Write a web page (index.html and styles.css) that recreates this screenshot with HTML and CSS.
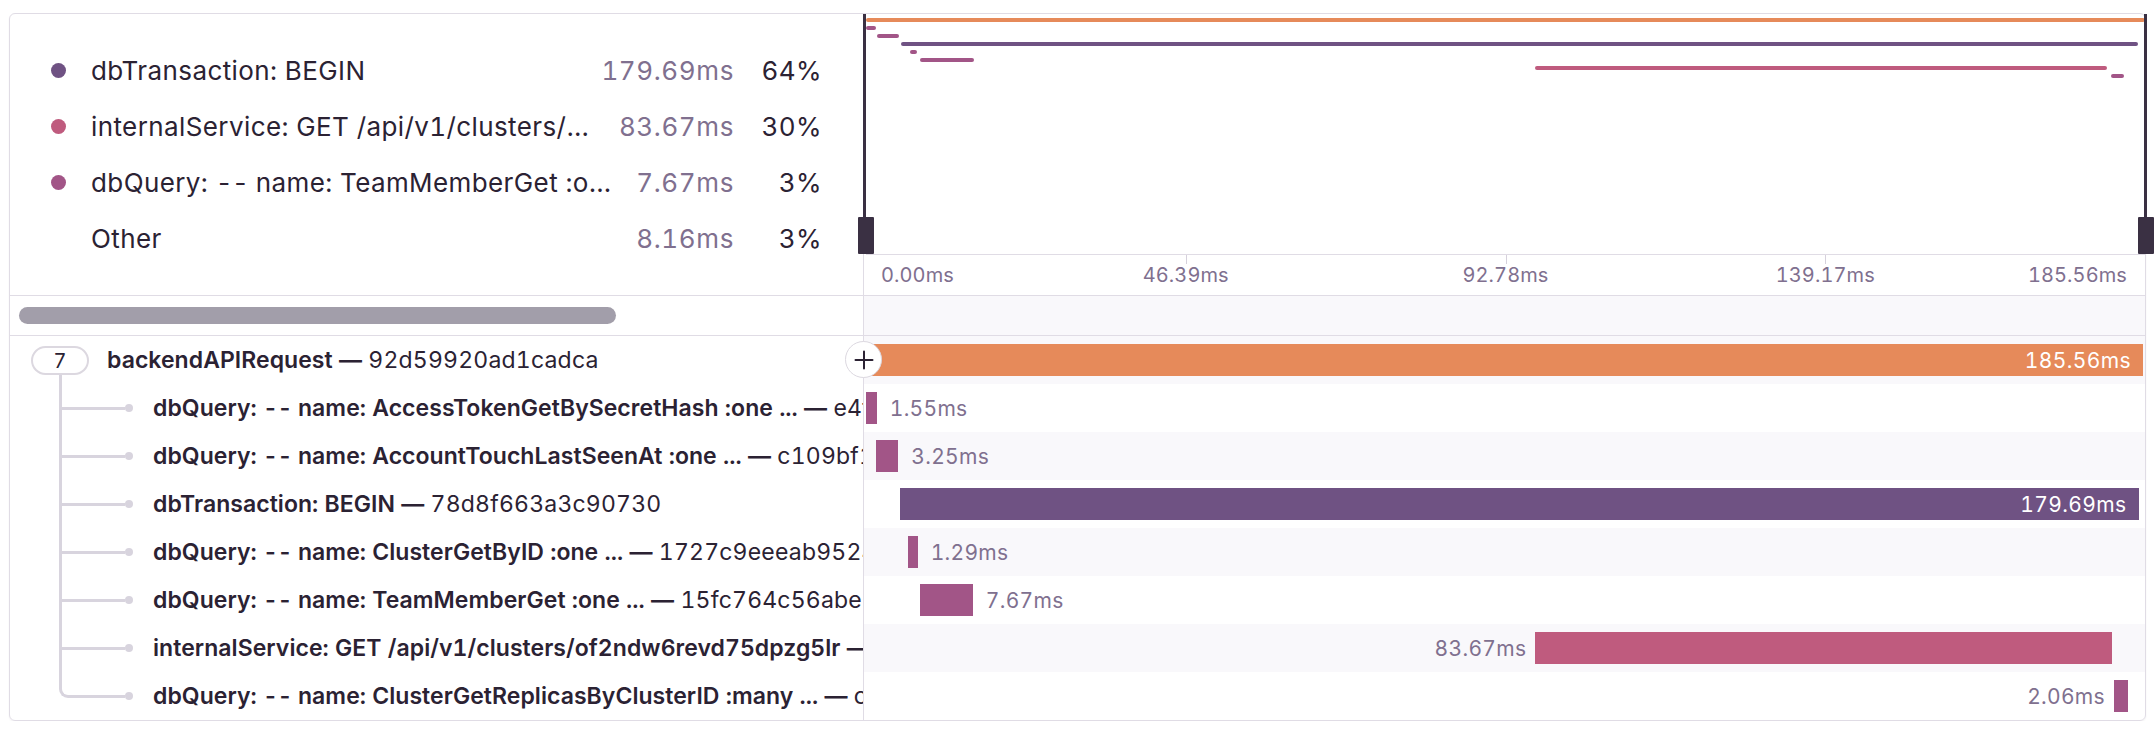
FILE: index.html
```html
<!DOCTYPE html>
<html lang="en">
<head>
<meta charset="utf-8">
<title>Trace</title>
<link rel="stylesheet" href="styles.css">
</head>
<body>
<div class="card">
  <div class="top">
    <div class="legend">
      <div class="lg-row"><span class="lg-dot c-txn"></span><span class="lg-name">dbTransaction: BEGIN</span><span class="lg-ms">179.69ms</span><span class="lg-pct">64%</span></div>
      <div class="lg-row"><span class="lg-dot c-svc"></span><span class="lg-name">internalService: GET /api/v1/clusters/of2ndw6revd75dpzg5lr</span><span class="lg-ms">83.67ms</span><span class="lg-pct">30%</span></div>
      <div class="lg-row"><span class="lg-dot c-qry"></span><span class="lg-name">dbQuery: <span class="dd">--</span> name: TeamMemberGet :one SELECT</span><span class="lg-ms">7.67ms</span><span class="lg-pct">3%</span></div>
      <div class="lg-row"><span class="lg-dot"></span><span class="lg-name">Other</span><span class="lg-ms">8.16ms</span><span class="lg-pct">3%</span></div>
    </div>
    <div class="chart">
      <div class="minimap">
        <div class="mm-track"><div class="mm-bar c-root" style="margin-left:0%;width:100%"></div></div>
        <div class="mm-track"><div class="mm-bar c-qry" style="margin-left:0%;width:0.8%"></div></div>
        <div class="mm-track"><div class="mm-bar c-qry" style="margin-left:0.86%;width:1.72%"></div></div>
        <div class="mm-track"><div class="mm-bar c-txn" style="margin-left:2.74%;width:96.7%"></div></div>
        <div class="mm-track"><div class="mm-bar c-qry" style="margin-left:3.44%;width:0.55%"></div></div>
        <div class="mm-track"><div class="mm-bar c-qry" style="margin-left:4.22%;width:4.2%"></div></div>
        <div class="mm-track"><div class="mm-bar c-svc" style="margin-left:52.3%;width:44.7%"></div></div>
        <div class="mm-track"><div class="mm-bar c-qry" style="margin-left:97.34%;width:1.0%"></div></div>
        <div class="edge edge-l"></div>
        <div class="handle handle-l"></div>
        <div class="edge edge-r"></div>
        <div class="handle handle-r"></div>
      </div>
      <div class="axis">
        <span class="tick" style="left:25%"></span>
        <span class="tick" style="left:50%"></span>
        <span class="tick" style="left:75%"></span>
        <span class="ax-lbl ax-first">0.00ms</span>
        <span class="ax-lbl ax-mid" style="left:25%">46.39ms</span>
        <span class="ax-lbl ax-mid" style="left:50%">92.78ms</span>
        <span class="ax-lbl ax-mid" style="left:75%">139.17ms</span>
        <span class="ax-lbl ax-last">185.56ms</span>
      </div>
    </div>
  </div>

  <div class="scroll-row">
    <div class="scroll-left"><div class="thumb"></div></div>
    <div class="scroll-right"></div>
  </div>

  <div class="rows">
    <div class="row row-root">
      <div class="row-l">
        <div class="badge-col"><span class="badge">7</span><span class="stem"></span></div>
        <span class="lbl root-lbl"><b>backendAPIRequest —</b> 92d59920ad1cadca</span>
      </div>
      <div class="row-r stripe">
        <div class="track">
          <div class="bar c-root bar-in" style="margin-left:0%;width:99.85%"><span class="bl-in">185.56ms</span></div>
        </div>
      </div>
      <span class="toggle"><svg width="20" height="20" viewBox="0 0 20 20"><path d="M10 1.5V18.5M1.5 10H18.5" stroke="#2b2233" stroke-width="2" stroke-linecap="round" fill="none"/></svg></span>
    </div>

    <div class="row">
      <div class="row-l"><span class="conn"></span><span class="tdot"></span><span class="lbl"><b>dbQuery: <span class="dd">--</span> name: AccessTokenGetBySecretHash :one ... —</b> e4f1a0c2b7d93e51</span></div>
      <div class="row-r"><div class="track"><div class="bar c-qry" style="margin-left:0%;width:0.84%"></div><span class="bl">1.55ms</span></div></div>
    </div>

    <div class="row">
      <div class="row-l"><span class="conn"></span><span class="tdot"></span><span class="lbl"><b>dbQuery: <span class="dd">--</span> name: AccountTouchLastSeenAt :one ... —</b> c109bf1e8a2d4c70</span></div>
      <div class="row-r stripe"><div class="track"><div class="bar c-qry" style="margin-left:0.78%;width:1.75%"></div><span class="bl">3.25ms</span></div></div>
    </div>

    <div class="row">
      <div class="row-l"><span class="conn"></span><span class="tdot"></span><span class="lbl"><b>dbTransaction: BEGIN —</b> 78d8f663a3c90730</span></div>
      <div class="row-r"><div class="track"><div class="bar c-txn bar-in" style="margin-left:2.66%;width:96.84%"><span class="bl-in">179.69ms</span></div></div></div>
    </div>

    <div class="row">
      <div class="row-l"><span class="conn"></span><span class="tdot"></span><span class="lbl"><b>dbQuery: <span class="dd">--</span> name: ClusterGetByID :one ... —</b> 1727c9eeeab9524f</span></div>
      <div class="row-r stripe"><div class="track"><div class="bar c-qry" style="margin-left:3.28%;width:0.76%"></div><span class="bl">1.29ms</span></div></div>
    </div>

    <div class="row">
      <div class="row-l"><span class="conn"></span><span class="tdot"></span><span class="lbl"><b>dbQuery: <span class="dd">--</span> name: TeamMemberGet :one ... —</b> 15fc764c56abe01d</span></div>
      <div class="row-r"><div class="track"><div class="bar c-qry" style="margin-left:4.22%;width:4.13%"></div><span class="bl">7.67ms</span></div></div>
    </div>

    <div class="row">
      <div class="row-l"><span class="conn"></span><span class="tdot"></span><span class="lbl"><b>internalService: GET /api/v1/clusters/of2ndw6revd75dpzg5lr —</b> 3b1e0f9a6c2d84e7</span></div>
      <div class="row-r stripe"><div class="track track-end"><span class="bl bl-left">83.67ms</span><div class="bar c-svc" style="width:45.05%;margin-right:2.62%"></div></div></div>
    </div>

    <div class="row">
      <div class="row-l"><span class="conn conn-last"></span><span class="tdot"></span><span class="lbl"><b>dbQuery: <span class="dd">--</span> name: ClusterGetReplicasByClusterID :many ... —</b> c8e21a7f4b09d356</span></div>
      <div class="row-r"><div class="track track-end"><span class="bl bl-left">2.06ms</span><div class="bar c-qry" style="width:1.11%;margin-right:1.32%"></div></div></div>
    </div>
  </div>
</div>
</body>
</html>
```

FILE: styles.css
```css
* { box-sizing: border-box; }

body {
  margin: 0;
  background: #ffffff;
  font-family: Inter, "Noto Sans", "DejaVu Sans", sans-serif;
  font-variant-numeric: tabular-nums;
  color: #2b2233;
}

.card {
  margin: 13px 0 0 9px;
  width: 2137px;
  height: 708px;
  border: 1px solid #e0dce5;
  border-radius: 6px;
  box-shadow: 0 1px 2px rgba(43, 34, 51, 0.06);
}

.dd { letter-spacing: -0.5px; }

/* ---------- top: legend + minimap ---------- */
.top {
  display: flex;
  height: 282px;
  border-bottom: 1px solid #e0dce5;
}

.legend {
  width: 854px;
  flex: none;
  border-right: 1px solid #e0dce5;
  display: flex;
  flex-direction: column;
  justify-content: center;
  padding: 0 41px;
}

.lg-row {
  height: 56px;
  display: flex;
  align-items: center;
  font-size: 26px;
  letter-spacing: 0.4px;
  white-space: nowrap;
}

.lg-dot {
  width: 15px;
  height: 15px;
  border-radius: 50%;
  flex: none;
  margin-right: 25px;
}

.lg-name {
  flex: 1;
  min-width: 0;
  overflow: hidden;
  text-overflow: ellipsis;
  margin-right: 18px;
}

.lg-ms {
  color: #80708f;
  flex: none;
  letter-spacing: 0.6px;
}

.lg-pct {
  width: 70px;
  margin-left: 18px;
  text-align: right;
  flex: none;
}

/* span colours */
.c-root { background: #e68a5a; }
.c-txn { background: #6f5283; }
.c-svc { background: #bf5b7e; }
.c-qry { background: #a25587; }

.chart {
  flex: 1;
  display: flex;
  flex-direction: column;
  min-width: 0;
}

.minimap {
  height: 240px;
  position: relative;
  padding: 4px 0 0 2px;
}

.mm-track {
  height: 4px;
  margin-bottom: 4px;
  display: flex;
}

.mm-bar {
  height: 4px;
  border-radius: 2px;
  flex: none;
}

.edge {
  position: absolute;
  top: 0;
  width: 3px;
  bottom: 30px;
  background: #3a3043;
}
.edge-l { left: -1px; }
.edge-r { right: -2px; }

.handle {
  position: absolute;
  bottom: 0;
  width: 16px;
  height: 37px;
  background: #3a3043;
  border-radius: 1px;
}
.handle-l { left: -6px; }
.handle-r { right: -9px; }

.axis {
  height: 41px;
  border-top: 1px solid #e0dce5;
  position: relative;
  margin-left: 2px;
  font-size: 20px;
  letter-spacing: 0.1px;
  color: #80708f;
}

.tick {
  position: absolute;
  top: 0;
  width: 1px;
  height: 9px;
  background: #d6d1dc;
}

.ax-lbl {
  position: absolute;
  top: 0;
  line-height: 40px;
  white-space: nowrap;
}
.ax-first { left: 15px; }
.ax-last { right: 18px; }
.ax-mid { transform: translateX(-50%); }

/* ---------- scrollbar row ---------- */
.scroll-row {
  display: flex;
  height: 40px;
  border-bottom: 1px solid #e0dce5;
}

.scroll-left {
  width: 854px;
  flex: none;
  border-right: 1px solid #e0dce5;
  display: flex;
  align-items: center;
  padding-left: 9px;
}

.thumb {
  width: 597px;
  height: 17px;
  border-radius: 9px;
  background: #a29eaa;
}

.scroll-right {
  flex: 1;
  background: #f9f8fb;
}

/* ---------- span rows ---------- */
.row {
  display: flex;
  height: 48px;
  position: relative;
}

.row-l {
  width: 854px;
  flex: none;
  border-right: 1px solid #e0dce5;
  display: flex;
  align-items: center;
  overflow: hidden;
  white-space: nowrap;
  padding-left: 21px;
  font-size: 23px;
  letter-spacing: 0.2px;
}

.lbl b {
  font-weight: 600;
  letter-spacing: 0.05px;
}

.root-lbl { margin-left: 18px; }

.badge-col {
  width: 58px;
  align-self: stretch;
  flex: none;
  display: flex;
  flex-direction: column;
  align-items: center;
  padding-top: 10px;
}

.badge {
  width: 58px;
  height: 29px;
  border: 2px solid #dcd8e0;
  border-radius: 15px;
  display: flex;
  align-items: center;
  justify-content: center;
  font-size: 20px;
  background: #fff;
}

.stem {
  flex: 1;
  width: 3px;
  background: #d8d4de;
}

.conn {
  align-self: stretch;
  width: 66px;
  margin-left: 28px;
  position: relative;
  flex: none;
}
.conn::before {
  content: "";
  position: absolute;
  left: 0;
  top: 0;
  bottom: 0;
  width: 3px;
  background: #d8d4de;
}
.conn::after {
  content: "";
  position: absolute;
  left: 0;
  right: 0;
  top: 50%;
  height: 3px;
  margin-top: -1.5px;
  background: #d8d4de;
}
.conn-last::before {
  bottom: calc(50% - 1.5px);
  width: 12px;
  background: none;
  border-left: 3px solid #d8d4de;
  border-bottom: 3px solid #d8d4de;
  border-bottom-left-radius: 9px;
}
.conn-last::after { left: 12px; }

.tdot {
  width: 8px;
  height: 8px;
  border-radius: 50%;
  background: #d8d4de;
  flex: none;
  margin-right: 20px;
}

.row-r {
  flex: 1;
  min-width: 0;
  display: flex;
  align-items: center;
  padding-left: 2px;
}
.stripe { background: #f9f8fb; }

.track {
  flex: 1;
  height: 32px;
  display: flex;
  align-items: center;
}
.track-end { justify-content: flex-end; }

.bar {
  height: 32px;
  flex: none;
}

.bar-in {
  display: flex;
  align-items: center;
  justify-content: flex-end;
  padding-right: 12px;
}

.bl-in {
  color: #ffffff;
  font-size: 21px;
  letter-spacing: 0.4px;
}

.bl {
  color: #80708f;
  font-size: 21px;
  letter-spacing: 0.3px;
  margin-left: 13px;
  white-space: nowrap;
}
.bl-left {
  margin-left: 0;
  margin-right: 9px;
}

.toggle {
  position: absolute;
  left: 835px;
  top: 5px;
  width: 37px;
  height: 37px;
  border-radius: 50%;
  border: 1px solid #dcd8e0;
  background: #ffffff;
  display: flex;
  align-items: center;
  justify-content: center;
}
.toggle svg { display: block; }
```
